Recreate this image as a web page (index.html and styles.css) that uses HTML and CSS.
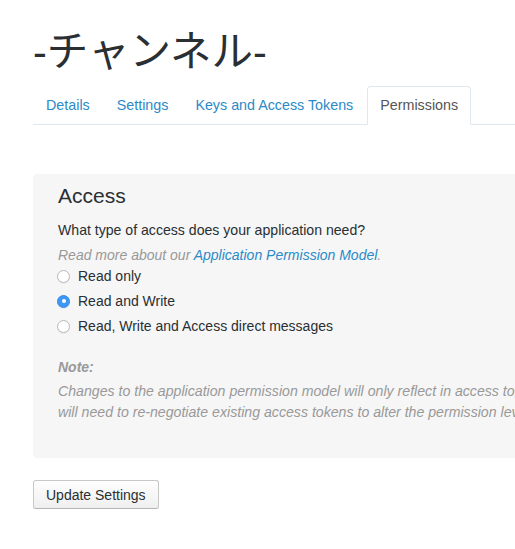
FILE: index.html
```html
<!DOCTYPE html>
<html lang="ja">
<head>
<meta charset="utf-8">
<title>-チャンネル-</title>
<link rel="stylesheet" href="styles.css">
</head>
<body>
<div class="page">
  <h1 class="title">-チャンネル-</h1>
  <ul class="tabs">
    <li class="tab"><a href="#">Details</a></li>
    <li class="tab"><a href="#">Settings</a></li>
    <li class="tab"><a href="#">Keys and Access Tokens</a></li>
    <li class="tab active"><a href="#">Permissions</a></li>
  </ul>
  <form class="form">
    <div class="panel">
      <h2 class="panel-title">Access</h2>
      <p class="question">What type of access does your application need?</p>
      <p class="hint">Read more about our <a href="#">Application Permission Model</a>.</p>
      <label class="option"><span class="radio"></span>Read only</label>
      <label class="option"><span class="radio checked"></span>Read and Write</label>
      <label class="option"><span class="radio"></span>Read, Write and Access direct messages</label>
      <p class="note-label">Note:</p>
      <p class="note">Changes to the application permission model will only reflect in access tokens obtained after the permission model change is saved. You<br>will need to re-negotiate existing access tokens to alter the permission level associated with each of your application's users.</p>
    </div>
    <button type="button" class="btn">Update Settings</button>
  </form>
</div>
</body>
</html>
```
FILE: styles.css
```css
html, body {
  margin: 0;
  padding: 0;
  overflow: hidden;
  background: #fff;
}
body {
  font-family: "Liberation Sans", Arial, "Noto Sans CJK JP", sans-serif;
  font-size: 14px;
  color: #292f33;
}
.page {
  width: 900px;
  padding: 0 0 0 33px;
}
.title {
  margin: 0;
  padding-top: 28px;
  font-family: "Liberation Sans", "Noto Sans CJK JP", sans-serif;
  font-weight: normal;
  font-size: 41.5px;
  line-height: 48px;
  color: #292f33;
}
.tabs {
  list-style: none;
  margin: 10px 0 0 0;
  padding: 0;
  display: flex;
  border-bottom: 1px solid #e1e8ed;
  width: 482px;
}
.tab {
  margin-right: 1px;
  margin-bottom: -1px;
}
.tab a {
  display: block;
  padding: 9px 12px 9px;
  line-height: 19px;
  font-size: 14.3px;
  color: #2b8ac8;
  text-decoration: none;
  border: 1px solid transparent;
  border-radius: 4px 4px 0 0;
}
.tab.active a {
  color: #555;
  background: #fff;
  border-color: #e1e8ed #e1e8ed transparent;
}
.form {
  margin-top: 49px;
}
.panel {
  background: #f6f6f6;
  border-radius: 4px;
  padding: 9px 25px 35px;
  width: 800px;
}
.panel-title {
  margin: 0;
  font-size: 21px;
  font-weight: normal;
  line-height: 26px;
  color: #292f33;
}
.question {
  margin: 11px 0 0;
  line-height: 20px;
  font-size: 14.1px;
}
.hint {
  margin: 5px 0 0;
  line-height: 20px;
  font-style: italic;
  color: #999;
}
.hint a {
  color: #2b8ac8;
  text-decoration: none;
}
.option {
  display: flex;
  align-items: center;
  line-height: 20px;
  margin-top: 5px;
}
.hint + .option {
  margin-top: 1px;
}
.radio {
  width: 13px;
  height: 13px;
  box-sizing: border-box;
  border: 1px solid #b9b9b9;
  border-radius: 50%;
  background: #fff;
  margin-right: 8px;
  margin-left: -1px;
  flex: none;
  position: relative;
  box-shadow: 0 1px 1px rgba(0,0,0,0.05);
}
.radio.checked {
  background: #3d98f5;
  border-color: #3a8ce6;
}
.radio.checked::after {
  content: "";
  position: absolute;
  left: 3.5px;
  top: 3.5px;
  width: 4px;
  height: 4px;
  border-radius: 50%;
  background: #fff;
}
.note-label {
  margin: 21px 0 0;
  font-weight: bold;
  font-style: italic;
  color: #999;
  line-height: 20px;
}
.note {
  margin: 4px 0 0;
  font-style: italic;
  font-size: 14.15px;
  color: #999;
  line-height: 21px;
  white-space: nowrap;
}
.btn {
  margin-top: 22px;
  font-family: "Liberation Sans", Arial, sans-serif;
  font-size: 14px;
  color: #292f33;
  padding: 0 12px;
  height: 29px;
  border: 1px solid #c8c8c8;
  border-bottom-color: #b5b5b5;
  border-radius: 3px;
  background: linear-gradient(#fefefe, #efefef);
  box-shadow: 0 1px 1px rgba(0,0,0,0.06);
}
```
